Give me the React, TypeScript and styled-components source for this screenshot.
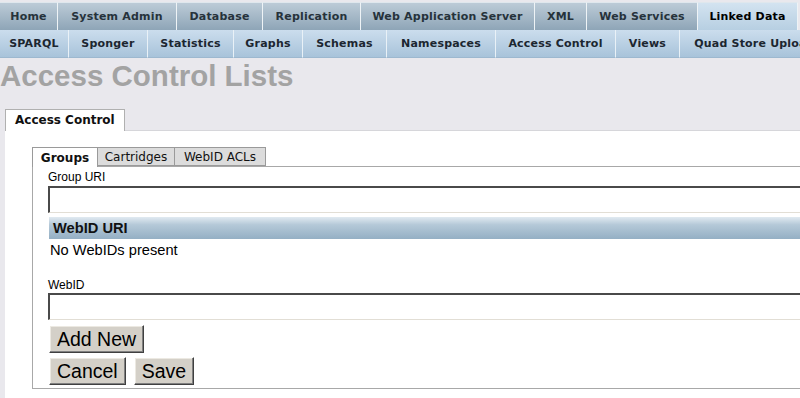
import React from "react";
import styled, { createGlobalStyle } from "styled-components";

const GlobalStyle = createGlobalStyle`
    html, body {
        margin: 0;
        padding: 0;
        overflow: hidden;
        background: #e9e8ed;
    }
    * {
        box-sizing: border-box;
    }
`;

const Page = styled.div`
    width: 800px;
    height: 398px;
    overflow: hidden;
    font-family: "Liberation Sans", Arial, sans-serif;
`;

const NavBar = styled.div`
    padding-top: 2px;
    white-space: nowrap;
    overflow: hidden;
`;

const NavRow = styled.div`
    display: flex;
    height: 28px;
`;

const TopTab = styled.div<{ $w: number; $active?: boolean }>`
    flex: 0 0 ${p => p.$w}px;
    display: flex;
    align-items: center;
    justify-content: center;
    font-family: "DejaVu Sans", Verdana, sans-serif;
    font-weight: 700;
    font-size: 11px;
    letter-spacing: 0.2px;
    color: ${p => (p.$active ? "#000" : "#26323b")};
    background: ${p =>
        p.$active
            ? "linear-gradient(#d3e3f0, #b7cfe2)"
            : "linear-gradient(#bccbd7, #8ea5b7)"};
    border-top: 1px solid #dfe7ed;
    border-right: 1px solid #eef3f6;
`;

const SubTab = styled.div<{ $w: number }>`
    flex: 0 0 ${p => p.$w}px;
    display: flex;
    align-items: center;
    justify-content: center;
    font-family: "DejaVu Sans", Verdana, sans-serif;
    font-weight: 700;
    font-size: 11px;
    letter-spacing: 0.2px;
    color: #1c2630;
    background: linear-gradient(#cbdded, #a8c3da);
    border-right: 1px solid #e9f1f7;
    border-bottom: 1px solid #9db8cf;
`;

const Title = styled.h1`
    margin: 0;
    padding-top: 2px;
    font-size: 29.5px;
    line-height: 32px;
    font-weight: 700;
    color: #a3a3a3;
`;

const OuterTabs = styled.div`
    display: flex;
    margin-top: 16px;
    padding-left: 5px;
`;

const OuterTab = styled.div`
    position: relative;
    bottom: -1px;
    width: 120px;
    height: 22px;
    padding-left: 9px;
    line-height: 20px;
    font-family: "DejaVu Sans", Verdana, sans-serif;
    font-weight: 700;
    font-size: 12px;
    color: #111;
    background: #fff;
    border: 1px solid #b0b0b0;
    border-bottom: none;
`;

const Panel = styled.div`
    margin-left: 5px;
    height: 300px;
    background: #fff;
    border-top: 1px solid #d6d6da;
    padding: 16px 0 0 27px;
`;

const InnerTabs = styled.div`
    display: flex;
    height: 19px;
`;

const InnerTab = styled.div<{ $w: number; $active?: boolean }>`
    position: relative;
    z-index: 1;
    flex: 0 0 ${p => p.$w}px;
    height: ${p => (p.$active ? 20 : 19)}px;
    display: flex;
    align-items: center;
    justify-content: center;
    font-family: "DejaVu Sans", Verdana, sans-serif;
    font-size: 12px;
    font-weight: ${p => (p.$active ? 700 : 400)};
    color: #111;
    background: ${p => (p.$active ? "#fff" : "#dcdcdc")};
    border: 1px solid #9a9a9a;
    border-bottom: ${p => (p.$active ? "none" : "1px solid #9a9a9a")};
    margin-right: -1px;
`;

const Box = styled.div`
    width: 1000px;
    border: 1px solid #a8a8a8;
    padding: 3px 0 3px 15px;
`;

const Label = styled.div<{ $gap: number }>`
    margin-top: ${p => p.$gap}px;
    font-size: 12px;
    line-height: 14px;
    color: #000;
`;

const TextInput = styled.div<{ $gap: number }>`
    margin-top: ${p => p.$gap}px;
    height: 27px;
    background: #fff;
    border-top: 2px solid #4a4a4a;
    border-left: 2px solid #4a4a4a;
    border-bottom: 1px solid #e2ded5;
`;

const ListHeader = styled.div`
    margin: 4px 0 0 1px;
    height: 22px;
    padding-left: 4px;
    line-height: 22px;
    font-size: 14.67px;
    font-weight: 700;
    color: #111;
    background: linear-gradient(#e1eaf1 0%, #b5c9d8 35%, #94afc4 100%);
`;

const EmptyNote = styled.div`
    margin-left: 2px;
    padding-top: 3px;
    font-size: 14.67px;
    line-height: 17px;
    color: #000;
`;

const ButtonRow = styled.div<{ $gap: number }>`
    display: flex;
    gap: 8px;
    margin: ${p => p.$gap}px 0 0 1px;
`;

const Button = styled.button`
    height: 28px;
    padding: 0 7px;
    font-family: "Liberation Sans", Arial, sans-serif;
    font-size: 19.5px;
    line-height: 24px;
    color: #000;
    background: #d4d0c8;
    border: 1px solid;
    border-color: #fff #404040 #404040 #fff;
    box-shadow: inset -1px -1px #808080, inset 1px 1px #ece9e2;
    border-radius: 0;
`;

const topTabs = [
    { label: "Home", w: 58 },
    { label: "System Admin", w: 119 },
    { label: "Database", w: 86 },
    { label: "Replication", w: 98 },
    { label: "Web Application Server", w: 174 },
    { label: "XML", w: 52 },
    { label: "Web Services", w: 111 },
    { label: "Linked Data", w: 100, active: true },
];

const subTabs = [
    { label: "SPARQL", w: 69 },
    { label: "Sponger", w: 79 },
    { label: "Statistics", w: 86 },
    { label: "Graphs", w: 69 },
    { label: "Schemas", w: 84 },
    { label: "Namespaces", w: 109 },
    { label: "Access Control", w: 120 },
    { label: "Views", w: 64 },
    { label: "Quad Store Upload", w: 150 },
];

const innerTabs = [
    { label: "Groups", w: 66, active: true },
    { label: "Cartridges", w: 78 },
    { label: "WebID ACLs", w: 92 },
];

export default function App() {
    return (
        <Page>
            <GlobalStyle />
            <NavBar>
                <NavRow>
                    {topTabs.map(t => (
                        <TopTab key={t.label} $w={t.w} $active={t.active}>
                            {t.label}
                        </TopTab>
                    ))}
                </NavRow>
                <NavRow>
                    {subTabs.map(t => (
                        <SubTab key={t.label} $w={t.w}>
                            {t.label}
                        </SubTab>
                    ))}
                </NavRow>
            </NavBar>
            <Title>Access Control Lists</Title>
            <OuterTabs>
                <OuterTab>Access Control</OuterTab>
            </OuterTabs>
            <Panel>
                <InnerTabs>
                    {innerTabs.map(t => (
                        <InnerTab key={t.label} $w={t.w} $active={t.active}>
                            {t.label}
                        </InnerTab>
                    ))}
                </InnerTabs>
                <Box>
                    <Label $gap={0}>Group URI</Label>
                    <TextInput $gap={2} />
                    <ListHeader>WebID URI</ListHeader>
                    <EmptyNote>No WebIDs present</EmptyNote>
                    <Label $gap={19}>WebID</Label>
                    <TextInput $gap={1} />
                    <ButtonRow $gap={5}>
                        <Button>Add New</Button>
                    </ButtonRow>
                    <ButtonRow $gap={4}>
                        <Button>Cancel</Button>
                        <Button>Save</Button>
                    </ButtonRow>
                </Box>
            </Panel>
        </Page>
    );
}
